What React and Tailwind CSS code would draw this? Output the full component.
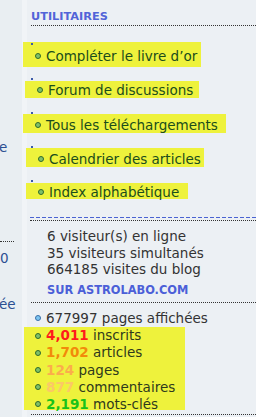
import React from "react";

const links = [
  { label: "Compléter le livre d’or", dot: "mt-[17px]", box: "-mt-[3px] h-[25px] ml-[1px] w-[178px] pt-[3px]" },
  { label: "Forum de discussions", dot: "mt-[11px]", box: "mt-[1px] h-[17px] ml-[3px] w-[174px] pt-[1px]" },
  { label: "Tous les téléchargements", dot: "mt-[14px]", box: "mt-0 h-[19px] ml-[1px] w-[203px] pt-[2px]" },
  { label: "Calendrier des articles", dot: "mt-[13px]", box: "mt-0 h-[19px] ml-[4px] w-[178px] pt-[2px]" },
  { label: "Index alphabétique", dot: "mt-[13px]", box: "mt-[1px] h-[16px] ml-[4px] w-[162px] pt-[1px]" },
];

const counters = [
  { n: "4,011", label: "inscrits", color: "text-[#ff1b1b]" },
  { n: "1,702", label: "articles", color: "text-[#f28a0a]" },
  { n: "124", label: "pages", color: "text-[#fbad4c]" },
  { n: "877", label: "commentaires", color: "text-[#fcc866]" },
  { n: "2,191", label: "mots-clés", color: "text-[#19c219]" },
];

function Bullet({ blue }) {
  return (
    <span
      className={
        "inline-block shrink-0 w-[6px] h-[6px] rounded-full border " +
        (blue ? "bg-[#7cc4f0] border-[#3a6fa8]" : "bg-[#7fc06a] border-[#2f6b2a]")
      }
    />
  );
}

export default function App() {
  return (
    <div
      className="flex w-[256px] h-[417px] overflow-hidden text-[13.5px] text-[#333]"
      style={{ fontFamily: '"DejaVu Sans", Verdana, sans-serif' }}
    >
      {/* clipped column on the left */}
      <div className="w-[22px] shrink-0 bg-[#e9eef2] text-[#2c4f92] leading-[16px] whitespace-nowrap">
        <div className="mt-[139px] -ml-[1px]">e</div>
        <div className="mt-[86px] w-[14px] border-b border-dotted border-[#333]" />
        <div className="mt-[8px]">0</div>
        <div className="mt-[30px] -ml-[1px]">ée</div>
      </div>

      {/* sidebar */}
      <div className="flex-1 bg-[linear-gradient(to_right,#f1f4f7_5px,#ecf0f4_5px)]">
        <div className="ml-[9px] h-[26px] border-b border-dotted border-[#333] pt-[10px] leading-[14px] text-[11.3px] font-bold text-[#5264d8]">
          UTILITAIRES
        </div>

        {links.map((l) => (
          <div key={l.label} className="flex flex-col items-start">
            <div className={"relative ml-[9px] w-[2px] h-[2px] bg-[#3b5aa8] " + l.dot} />
            <div className={"flex items-center gap-[5px] bg-[#eef23c] pl-[12px] text-[#1b4d1b] whitespace-nowrap " + l.box}>
              <Bullet />
              <span className="leading-[16px]">{l.label}</span>
            </div>
          </div>
        ))}

        <div className="mt-[18px] ml-[8px] h-px bg-[repeating-linear-gradient(to_right,#4a63d2_0_4px,transparent_4px_6px)]" />
        <div className="mt-[2px] ml-[8px] border-b border-dotted border-[#333]" />

        <div className="ml-[25px] pt-[7px] leading-[16.6px] whitespace-nowrap">
          <div>6 visiteur(s) en ligne</div>
          <div>35 visiteurs simultanés</div>
          <div>664185 visites du blog</div>
          <div className="mt-[4px] text-[11.4px] font-bold text-[#4b5fd8]">SUR ASTROLABO.COM</div>
        </div>

        <div className="mt-[4px] ml-[9px] border-b border-dotted border-[#333]" />

        <div className="mt-[7px] ml-[13px] flex items-center gap-[5px] leading-[16px] whitespace-nowrap">
          <Bullet blue />
          <span>677997 pages affichées</span>
        </div>

        <div className="mt-[1px] ml-[2px] w-[161px] h-[83px] bg-[#eef23c] pl-[11px] leading-[17.1px] whitespace-nowrap">
          {counters.map((c) => (
            <div key={c.label} className="flex items-center gap-[5px]">
              <Bullet />
              <span>
                <b className={c.color}>{c.n}</b> <span className="text-[#2e3a1c]">{c.label}</span>
              </span>
            </div>
          ))}
        </div>

        <div className="mt-[4px] ml-[9px] border-b border-dotted border-[#333]" />
        <div className="mt-[6px] ml-[9px] h-[20px] border border-[#d3d8dd] bg-[#f1f4f7]" />
      </div>
    </div>
  );
}
